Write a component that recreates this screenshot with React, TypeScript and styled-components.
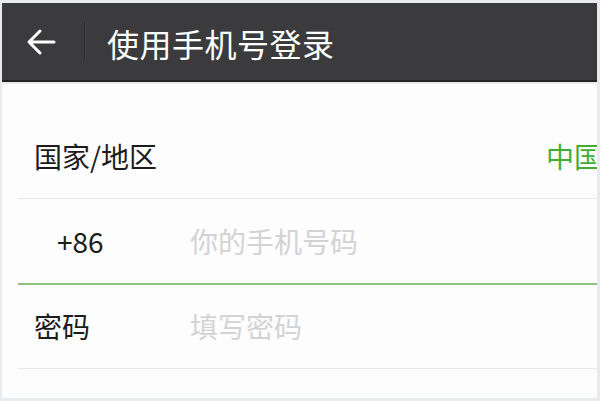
import React from 'react';
import styled, { createGlobalStyle } from 'styled-components';

const GlobalStyle = createGlobalStyle`
  html, body {
    margin: 0;
    padding: 0;
    background: #e7eaee;
  }
  body {
    font-family: 'Noto Sans CJK SC', 'Noto Sans', sans-serif;
  }
`;

const Frame = styled.div`
  width: 600px;
  height: 401px;
  box-sizing: border-box;
  border-style: solid;
  border-color: #e7eaee;
  border-width: 3px 3px 3px 2px;
  overflow: hidden;
  background: #fdfdfd;
  display: flex;
  flex-direction: column;
`;

const Header = styled.div`
  height: 77px;
  flex-shrink: 0;
  display: flex;
  align-items: center;
  background: #3b3b3d;
  border-bottom: 2px solid #232325;
  box-shadow: 0 1px 2px rgba(0, 0, 0, 0.15);
`;

const BackButton = styled.div`
  width: 82px;
  height: 100%;
  display: flex;
  align-items: center;
  padding-left: 24px;
  box-sizing: border-box;
`;

const Separator = styled.div`
  width: 1px;
  height: 40px;
  background: #2c2c2e;
  border-right: 1px solid #444446;
`;

const Title = styled.div`
  margin-left: 21px;
  color: #ffffff;
  font-size: 32px;
  line-height: 1;
  letter-spacing: 0.5px;
  margin-top: 2px;
`;

const Form = styled.div`
  padding-top: 32px;
  padding-left: 16px;
`;

const Row = styled.div<{ $active?: boolean }>`
  height: 84px;
  display: flex;
  align-items: center;
  border-bottom: ${(p) => (p.$active ? '2px solid #8fc47f' : '1px solid #e8e8e8')};
  margin-bottom: ${(p) => (p.$active ? '-1px' : '0')};
  font-size: 28px;
  line-height: 1;
`;

const Label = styled.div<{ $indent?: number }>`
  width: 172px;
  flex-shrink: 0;
  padding-left: ${(p) => 16 + (p.$indent || 0)}px;
  box-sizing: border-box;
  color: #1c1c1c;
`;

const Placeholder = styled.div`
  color: #d3d3d5;
  flex: 1;
`;

const Value = styled.div`
  margin-left: auto;
  margin-right: -5px;
  color: #3fae32;
  white-space: nowrap;
`;

export default function App() {
  return (
    <>
      <GlobalStyle />
      <Frame>
        <Header>
          <BackButton>
            <svg width="30" height="28" viewBox="0 0 30 28" fill="none">
              <path
                d="M28 14H4M14 3L3 14l11 11"
                stroke="#ffffff"
                strokeWidth="3"
                strokeLinecap="round"
                strokeLinejoin="round"
              />
            </svg>
          </BackButton>
          <Separator />
          <Title>使用手机号登录</Title>
        </Header>
        <Form>
          <Row>
            <Label>国家/地区</Label>
            <Value>中国</Value>
          </Row>
          <Row $active>
            <Label $indent={23}>+86</Label>
            <Placeholder>你的手机号码</Placeholder>
          </Row>
          <Row>
            <Label>密码</Label>
            <Placeholder>填写密码</Placeholder>
          </Row>
        </Form>
      </Frame>
    </>
  );
}
